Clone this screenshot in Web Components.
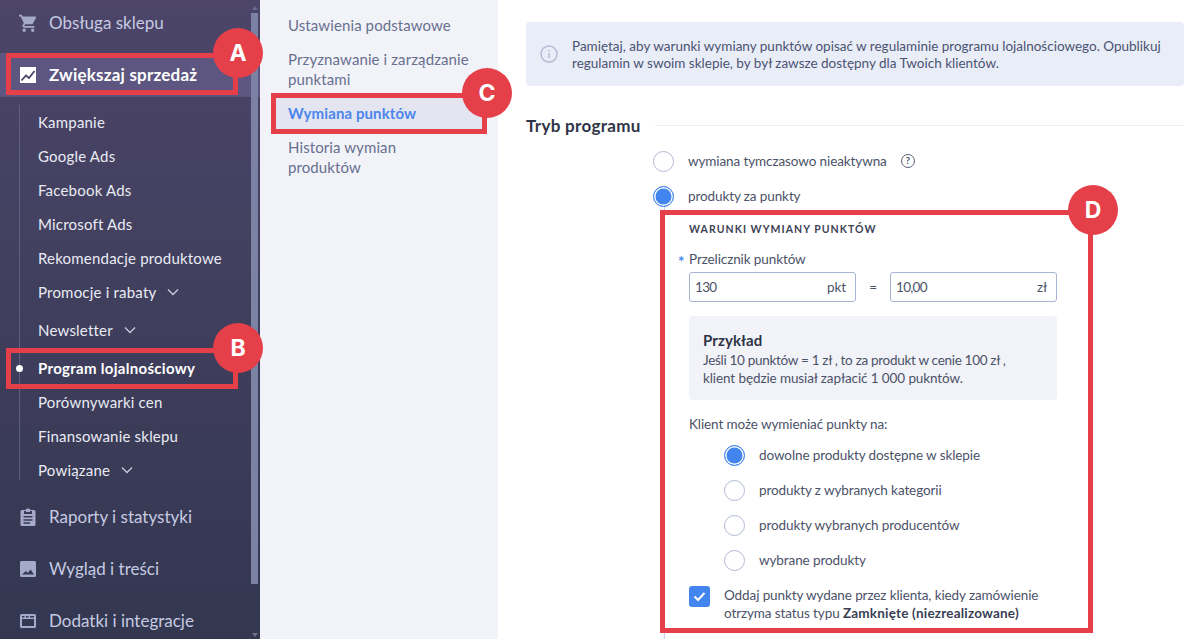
<!DOCTYPE html>
<html lang="pl">
<head>
<meta charset="utf-8">
<title>Program lojalnościowy</title>
<style>
    html, body { margin: 0; height: 100%; overflow: hidden; }
    body { font-family: "Lato", "Noto Sans", sans-serif; background: #fff; }
    #page { display: flex; height: 639px; position: relative; overflow: hidden; }
</style>
</head>
<body>
<div id="page">
    <shop-sidebar>
        <side-item>
            <svg slot="icon" viewBox="1 1 21 21"><path d="M7 18a2 2 0 1 0 0 4 2 2 0 0 0 0-4zM1 2v2h2l3.6 7.6L5.2 14c-.1.3-.2.6-.2 1 0 1.1.9 2 2 2h12v-2H7.4a.25.25 0 0 1-.25-.25l.03-.12L8.1 13h7.45c.75 0 1.41-.41 1.75-1.03L20.88 5.5A1 1 0 0 0 20 4H5.2l-.94-2H1zm16 16a2 2 0 1 0 0 4 2 2 0 0 0 0-4z"/></svg>
            Obsługa sklepu
        </side-item>
        <side-item active>
            <svg slot="icon" viewBox="0 0 18 18"><path fill="#fff" d="M1 1h16v16H1z"/><path fill="none" stroke="#4a4468" stroke-width="1.8" d="M2.5 14.5l4.5-5 3 2.5 5.5-7"/></svg>
            Zwiększaj sprzedaż
        </side-item>
        <sub-list>
            <sub-item>Kampanie</sub-item>
            <sub-item>Google Ads</sub-item>
            <sub-item>Facebook Ads</sub-item>
            <sub-item>Microsoft Ads</sub-item>
            <sub-item>Rekomendacje produktowe</sub-item>
            <sub-item chevron style="margin-bottom:4px">Promocje i rabaty</sub-item>
            <sub-item chevron style="margin-bottom:4px">Newsletter</sub-item>
            <sub-item active>Program lojalnościowy</sub-item>
            <sub-item>Porównywarki cen</sub-item>
            <sub-item>Finansowanie sklepu</sub-item>
            <sub-item chevron>Powiązane</sub-item>
        </sub-list>
        <side-item>
            <svg slot="icon" viewBox="0 0 18 18"><path fill-rule="evenodd" d="M6.5 2C6.8 1 7.8.4 9 .4S11.200 1 11.500 2H15a1.500 1.500 0 0 1 1.500 1.500v13A1.500 1.500 0 0 1 15 18H3a1.500 1.500 0 0 1-1.500-1.500v-13A1.500 1.500 0 0 1 3 2h3.500zM5 3v3h8V3h-2v1H7V3H5zM4.500 8v1.500h9V8h-9zm0 3.200v1.500h9v-1.500h-9zm0 3.100v1.500h6.500v-1.500H4.500z"/></svg>
            Raporty i statystyki
        </side-item>
        <side-item>
            <svg slot="icon" viewBox="0 0 18 18"><path fill-rule="evenodd" d="M2.500 1h13A1.500 1.500 0 0 1 17 2.500v13a1.500 1.500 0 0 1-1.500 1.500h-13A1.500 1.500 0 0 1 1 15.500v-13A1.500 1.500 0 0 1 2.500 1zM3 14.500h12l-3.500-5-2.700 3.400-1.800-1.900L3 14.500z"/></svg>
            Wygląd i treści
        </side-item>
        <side-item>
            <svg slot="icon" viewBox="0 0 18 18"><path fill-rule="evenodd" d="M2.500 2h13A1.500 1.500 0 0 1 17 3.500v11a1.500 1.500 0 0 1-1.500 1.500h-13A1.500 1.500 0 0 1 1 14.500v-11A1.500 1.500 0 0 1 2.500 2zM3 7v7h12V7H3zm0-3v1.500h2.500V4H3zm4 0v1.500h2.500V4H7zm4 0v1.500h4V4h-4z"/></svg>
            Dodatki i integracje
        </side-item>
    </shop-sidebar>

    <section-nav>
        <nav-link>Ustawienia podstawowe</nav-link>
        <nav-link>Przyznawanie i zarządzanie punktami</nav-link>
        <nav-link active>Wymiana punktów</nav-link>
        <nav-link style="line-height:20px">Historia wymian produktów</nav-link>
    </section-nav>

    <main-panel>
        <info-note>Pamiętaj, aby warunki wymiany punktów opisać w regulaminie programu lojalnościowego. Opublikuj regulamin w swoim sklepie, by był zawsze dostępny dla Twoich klientów.</info-note>
        <section-title>Tryb programu</section-title>
        <radio-row>wymiana tymczasowo nieaktywna <help-mark></help-mark></radio-row>
        <radio-row checked>produkty za punkty</radio-row>
        <exchange-form>
            <div slot="heading">Warunki wymiany punktów</div>
            <radio-row checked>dowolne produkty dostępne w sklepie</radio-row>
            <radio-row>produkty z wybranych kategorii</radio-row>
            <radio-row>produkty wybranych producentów</radio-row>
            <radio-row>wybrane produkty</radio-row>
        </exchange-form>
    </main-panel>

    <mark-frame letter="A" style="left:6px;top:53px;width:232px;height:42px"></mark-frame>
    <mark-frame letter="B" style="left:6px;top:348px;width:232px;height:41px"></mark-frame>
    <mark-frame letter="C" style="left:271px;top:93px;width:216px;height:41px"></mark-frame>
    <mark-frame letter="D" style="left:660px;top:210px;width:433px;height:423px"></mark-frame>
</div>

<script>
class ShopSidebar extends HTMLElement {
    constructor() {
        super();
        this.attachShadow({ mode: "open" }).innerHTML = `
        <style>
            :host {
                display: flex;
                flex-direction: column;
                gap: 8px;
                flex: none;
                width: 260px;
                height: 100%;
                box-sizing: border-box;
                padding-top: 1px;
                position: relative;
                overflow: hidden;
                background: linear-gradient(#4c4569, #333750);
            }
            .bar { position: absolute; top: 13px; right: 2px; width: 7px; height: 571px; background: #7b82a3; }
            .up { position: absolute; top: 6px; right: 2px; border: 3.5px solid transparent; border-top: 0; border-bottom: 4px solid #6b6a8c; }
            .down { position: absolute; bottom: 2px; right: 2px; border: 3.5px solid transparent; border-bottom: 0; border-top: 4px solid #6b6f8c; }
        </style>
        <slot></slot>
        <div class="up"></div><div class="bar"></div><div class="down"></div>`;
    }
}

class SideItem extends HTMLElement {
    constructor() {
        super();
        this.attachShadow({ mode: "open" }).innerHTML = `
        <style>
            :host {
                display: flex;
                flex: none;
                align-items: center;
                gap: 12px;
                height: 44px;
                padding-left: 19px;
                color: #c6cae2;
                font-size: 17px;
            }
            :host([active]) { background: #5c5680; color: #fff; font-weight: 700; letter-spacing: .2px; }
            ::slotted(svg) { width: 18px; height: 18px; flex: none; fill: #a5aaca; }
            span { padding-bottom: 2px; }
        </style>
        <slot name="icon"></slot><span><slot></slot></span>`;
    }
}

class SubList extends HTMLElement {
    constructor() {
        super();
        this.attachShadow({ mode: "open" }).innerHTML = `
        <style>
            :host {
                display: block;
                flex: none;
                background: linear-gradient(#5f6080, #5f6080) 19px 0 / 1px calc(100% - 7px) no-repeat;
            }
        </style>
        <slot></slot>`;
    }
}

class SubItem extends HTMLElement {
    constructor() {
        super();
        const chevron = this.hasAttribute("chevron")
            ? `<svg viewBox="0 0 12 8" width="12" height="8"><path d="M1 1.500l5 5 5-5" fill="none" stroke="#c9cbdc" stroke-width="1.300"/></svg>`
            : "";
        this.attachShadow({ mode: "open" }).innerHTML = `
        <style>
            :host {
                display: flex;
                align-items: center;
                gap: 11px;
                height: 34px;
                padding-left: 38px;
                position: relative;
                color: #e9ebf3;
                font-size: 15px;
                letter-spacing: .2px;
            }
            :host([active]) { color: #fff; font-weight: 700; letter-spacing: .3px; }
            :host([active])::before {
                content: "";
                position: absolute;
                left: 16px;
                top: 14px;
                width: 7px;
                height: 7px;
                border-radius: 50%;
                background: #fff;
            }
        </style>
        <span><slot></slot></span>${chevron}`;
    }
}

class SectionNav extends HTMLElement {
    constructor() {
        super();
        this.attachShadow({ mode: "open" }).innerHTML = `
        <style>
            :host {
                display: block;
                flex: none;
                width: 238px;
                height: 100%;
                box-sizing: border-box;
                padding: 8px 11px 0;
                background: #f2f3f8;
            }
        </style>
        <slot></slot>`;
    }
}

class NavLink extends HTMLElement {
    constructor() {
        super();
        this.attachShadow({ mode: "open" }).innerHTML = `
        <style>
            :host {
                display: block;
                padding: 7px 17px 6px;
                color: #687090;
                font-size: 15px;
                line-height: 20.500px;
                letter-spacing: .1px;
            }
            :host([active]) { padding-bottom: 7px; background: #e3e6f0; color: #4d85ec; font-weight: 700; }
        </style>
        <slot></slot>`;
    }
}

class MainPanel extends HTMLElement {
    constructor() {
        super();
        this.attachShadow({ mode: "open" }).innerHTML = `
        <style>
            :host {
                display: block;
                flex: 1;
                min-width: 0;
                box-sizing: border-box;
                padding: 22px 5px 0 28px;
            }
            ::slotted(radio-row) { margin-left: 127px; }
            ::slotted(exchange-form) { margin-left: 138px; }
        </style>
        <slot></slot>`;
    }
}

class InfoNote extends HTMLElement {
    constructor() {
        super();
        this.attachShadow({ mode: "open" }).innerHTML = `
        <style>
            :host {
                display: flex;
                align-items: center;
                gap: 14px;
                height: 64px;
                box-sizing: border-box;
                padding: 0 14px;
                border-radius: 4px;
                background: #e9edf8;
                color: #4b5372;
                font-size: 13.500px;
                line-height: 17px;
            }
            svg { flex: none; }
            div { margin-top: 2px; }
        </style>
        <svg viewBox="0 0 18 18" width="18" height="18">
            <circle cx="9" cy="9" r="8" fill="none" stroke="#b4bcd4" stroke-width="1.500"/>
            <path d="M9 8v5M9 5v1.500" stroke="#b4bcd4" stroke-width="1.500"/>
        </svg>
        <div><slot></slot></div>`;
    }
}

class SectionTitle extends HTMLElement {
    constructor() {
        super();
        this.attachShadow({ mode: "open" }).innerHTML = `
        <style>
            :host {
                display: flex;
                align-items: center;
                gap: 14px;
                height: 24px;
                margin: 27px 0 7px;
                color: #2f3547;
                font-size: 17px;
                font-weight: 700;
                letter-spacing: .3px;
            }
            i { flex: 1; height: 1px; background: #eceef3; }
        </style>
        <span><slot></slot></span><i></i>`;
    }
}

class RadioRow extends HTMLElement {
    constructor() {
        super();
        this.attachShadow({ mode: "open" }).innerHTML = `
        <style>
            :host {
                display: flex;
                align-items: center;
                gap: 14px;
                height: 35px;
                color: #4b5268;
                font-size: 13.500px;
                letter-spacing: -.1px;
            }
            .dot {
                flex: none;
                width: 21px;
                height: 21px;
                box-sizing: border-box;
                border: 1px solid #b0b9d6;
                border-radius: 50%;
                background: #fff;
            }
            :host([checked]) .dot {
                border: 1px solid #4285ee;
                background: #4285ee;
                box-shadow: inset 0 0 0 1.500px #fff;
            }
            .label { display: flex; align-items: center; gap: 10px; padding-bottom: 1px; }
        </style>
        <div class="dot"></div>
        <div class="label"><slot></slot></div>`;
    }
}

class HelpMark extends HTMLElement {
    constructor() {
        super();
        this.attachShadow({ mode: "open" }).innerHTML = `
        <style>
            :host { display: inline-flex; margin-left: 4px; color: #4b5268; }
            div {
                width: 14px;
                height: 14px;
                box-sizing: border-box;
                border: 1.300px solid #5b6278;
                border-radius: 50%;
                font-size: 10px;
                font-weight: 700;
                line-height: 11.500px;
                text-align: center;
            }
        </style>
        <div>?</div>`;
    }
}

class ExchangeForm extends HTMLElement {
    constructor() {
        super();
        this.attachShadow({ mode: "open" }).innerHTML = `
        <style>
            :host {
                display: block;
                box-sizing: border-box;
                margin-top: -7px;
                padding: 15px 0 40px 24px;
                border-left: 1px solid #cdd3e6;
                color: #4b5268;
                font-size: 13.500px;
                letter-spacing: -.1px;
            }
            .heading ::slotted(div) {
                height: 14px;
                color: #3d4356;
                font-size: 10.500px;
                line-height: 14px;
                font-weight: 700;
                letter-spacing: 1.050px;
                text-transform: uppercase;
            }
            .label { position: relative; margin-top: 13px; line-height: 20px; }
            .label b { position: absolute; left: -11px; top: 2px; color: #4285ee; font-weight: 700; font-size: 15px; }
            .rate { display: flex; align-items: center; width: 368px; margin-top: 3px; color: #4b5268; }
            .rate span { width: 34px; text-align: center; }
            .field {
                flex: 1;
                display: flex;
                justify-content: space-between;
                align-items: center;
                height: 30px;
                box-sizing: border-box;
                padding: 0 9px 0 5px;
                border: 1px solid #a9b4d2;
                border-radius: 3px;
            }
            .num { letter-spacing: -.7px; }
            .example {
                width: 368px;
                height: 84px;
                box-sizing: border-box;
                margin-top: 14px;
                padding: 14px 14px 0;
                border-radius: 4px;
                background: #f2f3f8;
                line-height: 18px;
            }
            .example h4 { margin: 0 0 1px; color: #2f3547; font-size: 15px; line-height: 20px; font-weight: 700; letter-spacing: .1px; }
            .example span { letter-spacing: -.3px; }
            .ask { margin-top: 14px; line-height: 20px; }
            .options { margin: 3.500px 0 0 35px; }
            .keep { display: flex; gap: 14px; margin-top: 8.500px; line-height: 18px; }
            .keep svg { flex: none; }
            .keep b { color: #3a4054; letter-spacing: .2px; }
        </style>
        <div class="heading"><slot name="heading"></slot></div>
        <div class="label"><b>*</b>Przelicznik punktów</div>
        <div class="rate">
            <div class="field"><div class="num">130</div><div>pkt</div></div>
            <span>=</span>
            <div class="field"><div class="num">10,00</div><div>zł</div></div>
        </div>
        <div class="example">
            <h4>Przykład</h4>
            <span>Jeśli 10 punktów = 1 zł , to za produkt w cenie 100 zł ,</span><br>
            klient będzie musiał zapłacić 1 000 puknt&oacute;w.
        </div>
        <div class="ask">Klient może wymieniać punkty na:</div>
        <div class="options"><slot></slot></div>
        <div class="keep">
            <svg viewBox="0 0 21 21" width="21" height="21">
                <rect width="21" height="21" rx="3" fill="#4285ee"/>
                <path d="M5.500 10.500l3.500 3.500 6.500-7" fill="none" stroke="#fff" stroke-width="2"/>
            </svg>
            <div>Oddaj punkty wydane przez klienta, kiedy zamówienie<br>otrzyma status typu <b>Zamknięte (niezrealizowane)</b></div>
        </div>`;
    }
}

// red call-outs lying over the screenshot, placed by the style attribute
class MarkFrame extends HTMLElement {
    constructor() {
        super();
        this.attachShadow({ mode: "open" }).innerHTML = `
        <style>
            :host {
                display: block;
                position: absolute;
                box-sizing: border-box;
                border: 5px solid #e53f4a;
            }
            div {
                position: absolute;
                top: -30px;
                right: -30px;
                width: 50px;
                height: 50px;
                border-radius: 50%;
                background: #e53f4a;
                color: #fff;
                font: 700 23px/50px Inter, "Liberation Sans", sans-serif;
                text-align: center;
            }
        </style>
        <div>${this.getAttribute("letter")}</div>`;
    }
}

customElements.define("shop-sidebar", ShopSidebar);
customElements.define("side-item", SideItem);
customElements.define("sub-list", SubList);
customElements.define("sub-item", SubItem);
customElements.define("section-nav", SectionNav);
customElements.define("nav-link", NavLink);
customElements.define("main-panel", MainPanel);
customElements.define("info-note", InfoNote);
customElements.define("section-title", SectionTitle);
customElements.define("radio-row", RadioRow);
customElements.define("help-mark", HelpMark);
customElements.define("exchange-form", ExchangeForm);
customElements.define("mark-frame", MarkFrame);
</script>
</body>
</html>
